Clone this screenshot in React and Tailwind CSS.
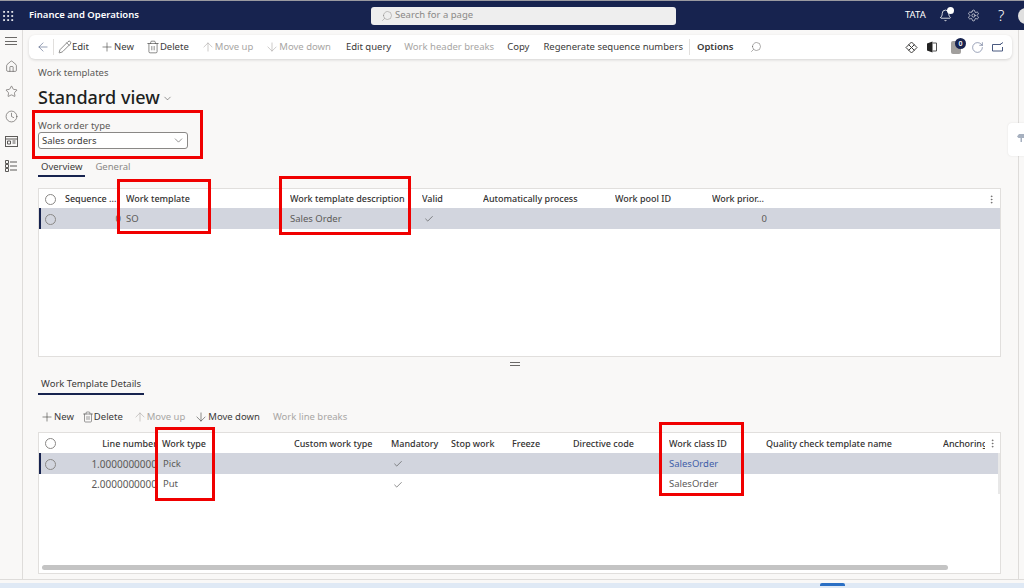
import React from "react";
import {
  ArrowDown,
  ArrowLeft,
  ArrowUp,
  Bell,
  Check,
  ChevronDown,
  Clock,
  EllipsisVertical,
  Grip,
  Home,
  Pencil,
  Plus,
  RotateCw,
  Search,
  Settings,
  Star,
  Trash2,
} from "lucide-react";

const ToolButton = ({ icon: Icon, label, disabled, bold, size = 14 }) => (
  <span className={`flex shrink-0 items-center whitespace-nowrap ${disabled ? "text-[#a8a6a4]" : "text-[#3b3a39]"} ${bold ? "font-semibold" : ""}`}>
    {Icon && <Icon size={size} strokeWidth={1} />}
    <span className="pt-px">{label}</span>
  </span>
);

const Radio = () => <span className="block h-[11px] w-[11px] rounded-full border border-[#8a8886]" />;

const Cell = ({ children, className = "" }) => (
  <div className={`flex items-center overflow-hidden whitespace-nowrap pt-px ${className}`}>{children}</div>
);

const Tick = () => <Check size={10} strokeWidth={1.5} className="ml-[2px] text-[#4a4a4a]" />;

export default function App() {
  return (
    <div className="relative flex h-[588px] w-[1024px] flex-col overflow-hidden bg-[#f9f8f7] text-[9.5px] text-[#3b3a39] [font-family:'Noto_Sans','Open_Sans',sans-serif]">
      {/* Top bar */}
      <div className="h-[1px] shrink-0 bg-[#9a9aa0]" />
      <header className="flex h-[29px] shrink-0 items-center bg-[#17234f] text-white">
        <Grip size={14} strokeWidth={1.6} className="ml-[1px] shrink-0" />
        <span className="ml-[14px] w-[110px] shrink-0 whitespace-nowrap text-[9.5px] font-semibold">Finance and Operations</span>
        <div className="ml-[232px] flex h-[18px] w-[305px] shrink-0 items-center rounded-[3px] bg-[#eeeeee] pl-[10px] text-[#8a8886]">
          <Search size={12} strokeWidth={1} className="-scale-x-100" />
          <span className="ml-[2px] text-[9.5px]">Search for a page</span>
        </div>
        <span className="ml-[229px] w-[22px] shrink-0 text-[9.5px]">TATA</span>
        <span className="relative ml-[12px] shrink-0">
          <Bell size={13} strokeWidth={1.5} />
          <span className="absolute -right-[2px] -top-[2px] h-[7px] w-[7px] rounded-full bg-white" />
        </span>
        <Settings size={13} strokeWidth={1.2} className="ml-[15px] shrink-0" />
        <span className="ml-[18px] shrink-0 text-[15px] font-light leading-none">?</span>
        <span className="ml-[14px] h-[16px] w-[16px] shrink-0 rounded-full bg-[#e0e0e0]" />
      </header>

      <div className="mb-[3px] flex min-h-0 flex-1 border-b border-[#dedcda]">
        {/* Left rail */}
        <aside className="flex w-[23px] shrink-0 flex-col items-center gap-[12px] border-r border-[#dedcda] pt-[6px] text-[#5c5a58]">
          <span className="mb-[2px] flex h-[10px] w-[12px] flex-col justify-between py-[1px]">
            <span className="h-px bg-[#6b6967]" />
            <span className="h-px bg-[#6b6967]" />
            <span className="h-px bg-[#6b6967]" />
          </span>
          <Home size={13} strokeWidth={1.2} />
          <Star size={13} strokeWidth={1.2} />
          <Clock size={13} strokeWidth={1.2} />
          <svg width="13" height="11" viewBox="0 0 13 11" fill="none" stroke="currentColor" className="my-[1px]">
            <rect x="0.5" y="0.5" width="12" height="10" />
            <path d="M0.5 3h12M2.5 5h3v3h-3zM7.5 5h3M7.5 7h3" />
          </svg>
          <svg width="12" height="12" viewBox="0 0 12 12" fill="none" stroke="currentColor">
            <path d="M0.500 0.500h3v3h-3zM0.500 4.500h3v3h-3zM0.500 8.500h3v3h-3zM5 2h7M5 6h7M5 10h7" />
          </svg>
        </aside>

        <main className="mr-[5px] flex min-w-0 flex-1 flex-col border-r border-[#dedcda] pl-[15px] pr-[17px]">
          {/* Action pane */}
          <div className="-ml-[9px] -mr-[11px] mt-[5px] flex h-[24px] shrink-0 items-center rounded-[6px] bg-white pl-[7px] pr-[8px] shadow-[0_1px_3px_rgba(0,0,0,0.15)]">
            <ArrowLeft size={14} strokeWidth={1} className="shrink-0 text-[#4a5a80]" />
            <span className="ml-[3px] mr-[4px] h-[16px] w-px shrink-0 bg-[#e1dfdd]" />
            <ToolButton icon={Pencil} label="Edit" />
            <span className="w-[11px] shrink-0" />
            <ToolButton icon={Plus} label="New" />
            <span className="w-[12px] shrink-0" />
            <ToolButton icon={Trash2} label="Delete" />
            <span className="w-[12px] shrink-0" />
            <ToolButton icon={ArrowUp} label="Move up" disabled />
            <span className="w-[12px] shrink-0" />
            <ToolButton icon={ArrowDown} label="Move down" disabled />
            <span className="w-[15px] shrink-0" />
            <ToolButton label="Edit query" />
            <span className="w-[13px] shrink-0" />
            <ToolButton label="Work header breaks" disabled />
            <span className="w-[13px] shrink-0" />
            <ToolButton label="Copy" />
            <span className="w-[14px] shrink-0" />
            <ToolButton label="Regenerate sequence numbers" />
            <span className="ml-[6px] mr-[7px] h-[16px] w-px shrink-0 bg-[#e1dfdd]" />
            <ToolButton label="Options" bold />
            <Search size={12} strokeWidth={1} className="ml-[16px] shrink-0 -scale-x-100 text-[#5c5a58]" />
            <div className="ml-auto flex items-center text-[#3b3a39]">
              <svg width="13" height="13" viewBox="0 0 13 13" fill="none" stroke="currentColor">
                <path d="M6.5 1 12 6.5 6.5 12 1 6.5zM3.5 3.5l6 6M9.5 3.5l-6 6" />
              </svg>
              <svg width="12" height="12" viewBox="0 0 12 12" className="ml-[8px]">
                <path d="M1 2.500 6.500 0.500V11.500L1 9.500z" fill="#222" />
                <path d="M6.500 2h4v8h-4" fill="none" stroke="#555" />
              </svg>
              <span className="relative ml-[13px] h-[13px] w-[10px] rounded-[2px] bg-[#a19f9d]">
                <span className="absolute -right-[5px] -top-[3px] flex h-[11px] w-[11px] items-center justify-center rounded-full bg-[#17234f] text-[7px] font-semibold leading-none text-white">0</span>
              </span>
              <RotateCw size={13} strokeWidth={1} className="ml-[10px] text-[#4a5a80]" />
              <svg width="12" height="10" viewBox="0 0 12 10" fill="none" stroke="#4a5a80" className="ml-[8px]">
                <path d="M9 2.500H0.500v6.500h10V5M8 2.500l3-2" />
              </svg>
            </div>
          </div>

          {/* Page title */}
          <div className="mt-[4px] shrink-0 leading-[20px] text-[#5c5a58]">Work templates</div>
          <div className="flex h-[27px] shrink-0 items-center text-[#201f1e]">
            <span className="text-[18px] font-medium leading-none">Standard view</span>
            <ChevronDown size={11} strokeWidth={1} className="ml-[2px] mt-[3px]" />
          </div>

          {/* Filter */}
          <div className="mt-[9px] shrink-0 leading-[13px] text-[#5c5a58]">Work order type</div>
          <div className="flex h-[17px] w-[150px] shrink-0 items-center justify-between rounded-[3px] border border-[#8a8886] bg-white pl-[3px] pr-[2px]">
            <span className="pt-px">Sales orders</span>
            <ChevronDown size={13} strokeWidth={1} />
          </div>

          <div className="mt-[9px] flex h-[20px] shrink-0 items-start">
            <span className="border-b-2 border-[#17234f] px-[3px] pb-[1px] pt-px leading-[15px]">Overview</span>
            <span className="ml-[10px] pt-px leading-[15px] text-[#8a8886]">General</span>
          </div>

          {/* Header grid */}
          <section className="mt-[10px] h-[169px] shrink-0 border border-[#e1dfdd] bg-white">
            <div className="grid h-[19px] grid-cols-[26px_61px_164px_132px_61px_132px_97px_55px_1fr_18px] text-[9px] font-medium text-[#323130]">
              <Cell className="pl-[6px]"><Radio /></Cell>
              <Cell>Sequence ...</Cell>
              <Cell>Work template</Cell>
              <Cell>Work template description</Cell>
              <Cell>Valid</Cell>
              <Cell>Automatically process</Cell>
              <Cell>Work pool ID</Cell>
              <Cell>Work prior...</Cell>
              <Cell />
              <Cell className="pl-[4px]"><EllipsisVertical size={11} strokeWidth={1} /></Cell>
            </div>
            <div className="grid h-[21px] grid-cols-[26px_61px_164px_132px_61px_132px_97px_55px_1fr] bg-[#d2d5de] text-[#5c5a58] shadow-[inset_2px_0_0_#17234f]">
              <Cell className="pl-[6px]"><Radio /></Cell>
              <Cell className="justify-end pr-[5px]">0</Cell>
              <Cell>SO</Cell>
              <Cell>Sales Order</Cell>
              <Cell><Tick /></Cell>
              <Cell />
              <Cell />
              <Cell className="justify-end">0</Cell>
              <Cell />
            </div>
          </section>

          {/* Splitter */}
          <div className="flex h-[14px] shrink-0 items-center justify-center pr-[10px]">
            <span className="flex h-[4px] w-[10px] flex-col justify-between">
              <span className="h-px bg-[#6b6967]" />
              <span className="h-px bg-[#6b6967]" />
            </span>
          </div>

          <div className="mt-[5px] flex shrink-0">
            <span className="border-b-2 border-[#17234f] px-[3px] pb-[2px] leading-[15px]">Work Template Details</span>
          </div>

          {/* Lines toolbar */}
          <div className="mt-[12px] flex h-[20px] shrink-0 items-center pl-[2px]">
            <ToolButton icon={Plus} label="New" />
            <span className="w-[8px] shrink-0" />
            <ToolButton icon={Trash2} label="Delete" size={12} />
            <span className="w-[10px] shrink-0" />
            <ToolButton icon={ArrowUp} label="Move up" disabled />
            <span className="w-[9px] shrink-0" />
            <ToolButton icon={ArrowDown} label="Move down" />
            <span className="w-[13px] shrink-0" />
            <ToolButton label="Work line breaks" disabled />
          </div>

          {/* Lines grid */}
          <section className="relative mb-[5px] mt-[5px] min-h-0 flex-1 border border-[#e1dfdd] bg-white">
            <div className="grid h-[20px] grid-cols-[26px_92px_137px_97px_60px_61px_61px_96px_97px_177px_42px_1fr] text-[9px] font-medium text-[#323130]">
              <Cell className="pl-[6px]"><Radio /></Cell>
              <Cell className="justify-end">Line number</Cell>
              <Cell className="pl-[5px]">Work type</Cell>
              <Cell>Custom work type</Cell>
              <Cell>Mandatory</Cell>
              <Cell>Stop work</Cell>
              <Cell>Freeze</Cell>
              <Cell>Directive code</Cell>
              <Cell>Work class ID</Cell>
              <Cell>Quality check template name</Cell>
              <Cell>Anchoring</Cell>
              <Cell className="pl-[2px]"><EllipsisVertical size={11} strokeWidth={1} /></Cell>
            </div>
            <div className="grid h-[21px] grid-cols-[26px_92px_137px_97px_60px_61px_61px_96px_97px_1fr] bg-[#d2d5de] text-[#5c5a58] shadow-[inset_2px_0_0_#17234f]">
              <Cell className="pl-[6px]"><Radio /></Cell>
              <Cell className="justify-end text-[10px]">1.0000000000</Cell>
              <Cell className="pl-[6px]">Pick</Cell>
              <Cell />
              <Cell><Tick /></Cell>
              <Cell />
              <Cell />
              <Cell />
              <Cell className="text-[#3f5ea8]">SalesOrder</Cell>
              <Cell />
            </div>
            <div className="grid h-[20px] grid-cols-[26px_92px_137px_97px_60px_61px_61px_96px_97px_1fr] text-[#5c5a58]">
              <Cell />
              <Cell className="justify-end text-[10px]">2.0000000000</Cell>
              <Cell className="pl-[6px]">Put</Cell>
              <Cell />
              <Cell><Tick /></Cell>
              <Cell />
              <Cell />
              <Cell />
              <Cell>SalesOrder</Cell>
              <Cell />
            </div>
            <div className="absolute right-0 top-[20px] h-[41px] w-[2px] bg-[#e8e8e8]" />
            <div className="absolute bottom-[3px] left-[3px] h-[5px] w-[906px] rounded-full bg-[#c4c4c4]" />
          </section>
        </main>
      </div>

      {/* Taskbar strip */}
      <div className="flex h-[5px] shrink-0 items-start bg-[#dfe9f5]">
        <span className="ml-[820px] h-[3px] w-[25px] rounded-t-[2px] bg-[#2a6fc4]" />
      </div>

      {/* Side pane tab */}
      <div className="absolute left-[1008px] top-[123px] flex h-[33px] w-[16px] items-center justify-end rounded-l-[4px] bg-white shadow-[0_0_2px_rgba(0,0,0,0.1)]">
        <svg width="7" height="8" viewBox="0 0 7 8" fill="#a6b0bf" className="-mt-[4px]">
          <path d="M2 0h5v4H5v4H3.500V4H1.500L0 2.500z" />
        </svg>
      </div>

      {/* Annotation boxes */}
      <div className="pointer-events-none absolute left-[32px] top-[110px] h-[49px] w-[171px] border-[3px] border-[#f00000]" />
      <div className="pointer-events-none absolute left-[117px] top-[179px] h-[55px] w-[94px] border-[3px] border-[#f00000]" />
      <div className="pointer-events-none absolute left-[279px] top-[176px] h-[59px] w-[132px] border-[3px] border-[#f00000]" />
      <div className="pointer-events-none absolute left-[155px] top-[427px] h-[74px] w-[60px] border-[3px] border-[#f00000]" />
      <div className="pointer-events-none absolute left-[659px] top-[422px] h-[74px] w-[85px] border-[3px] border-[#f00000]" />
    </div>
  );
}
